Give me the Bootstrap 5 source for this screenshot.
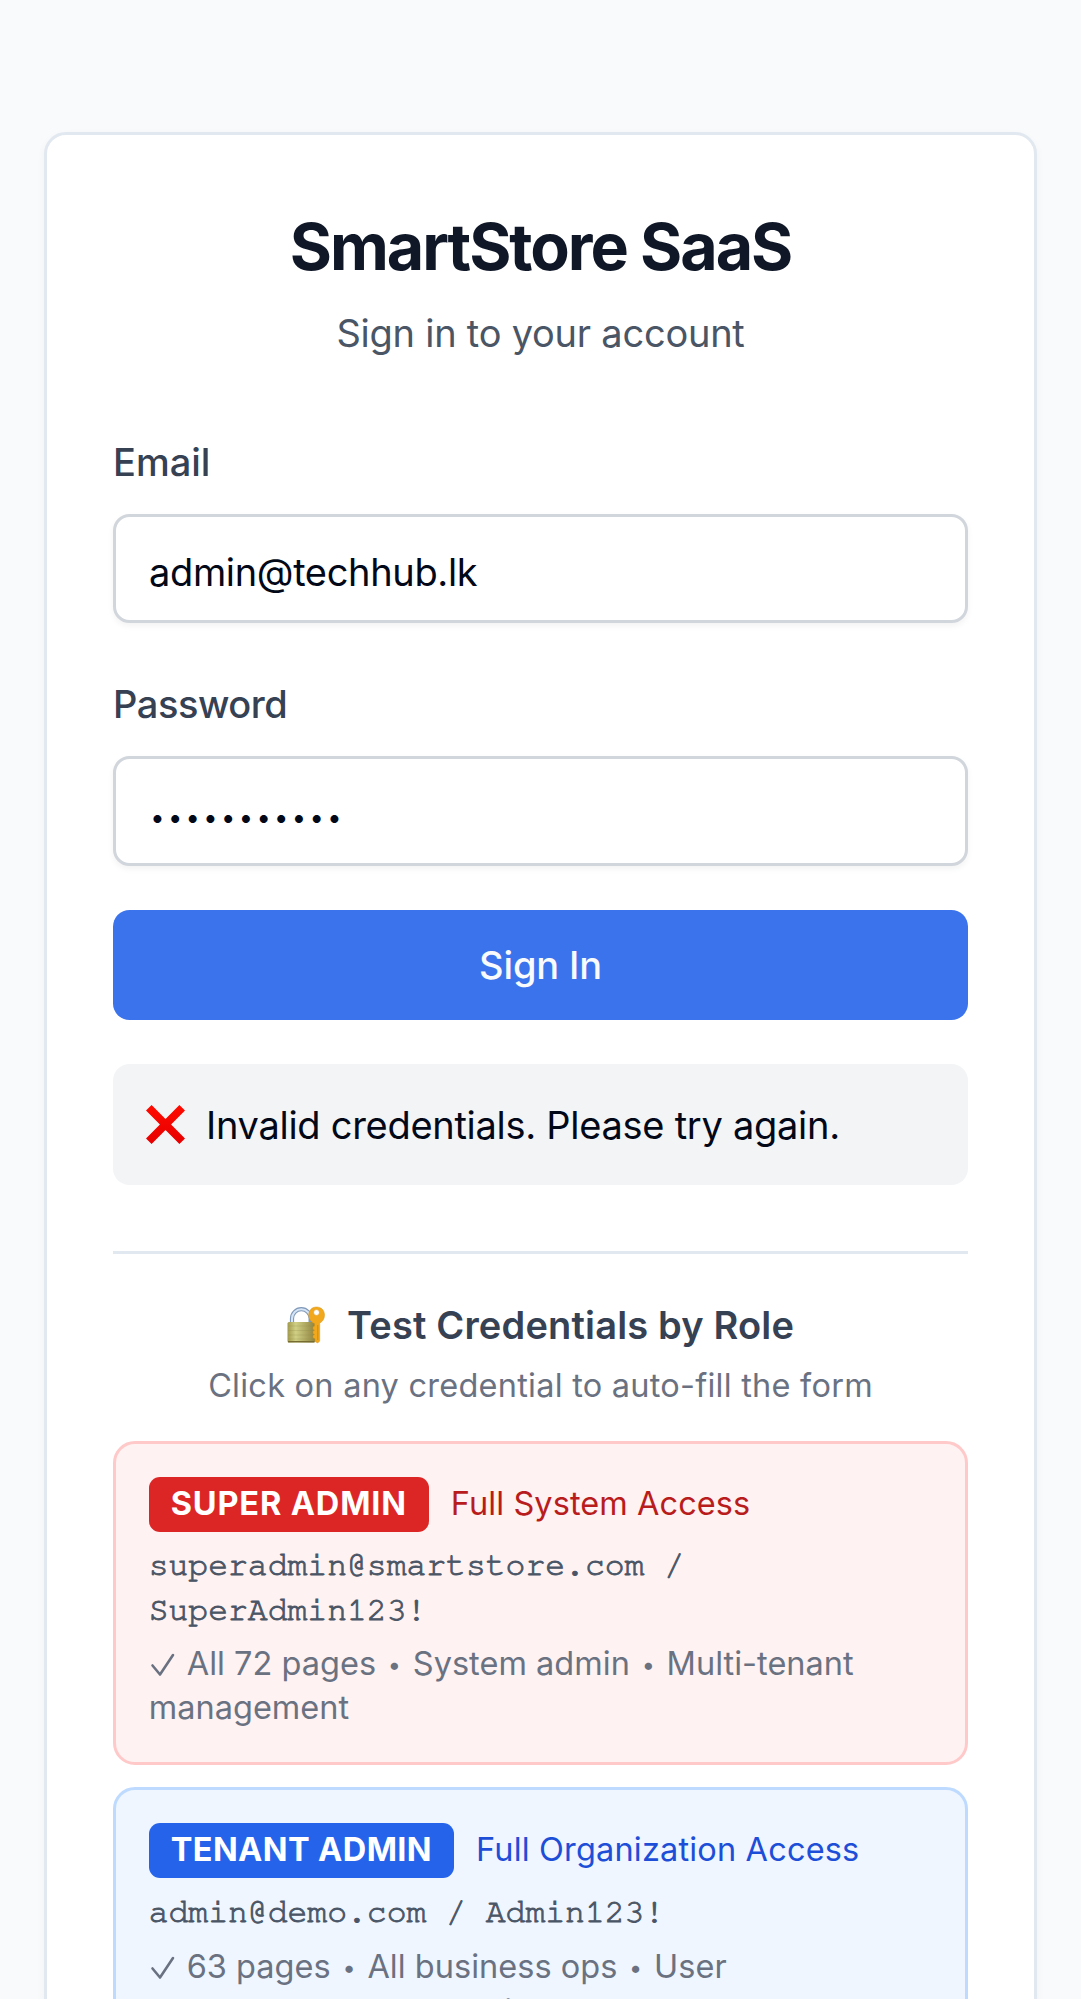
<!DOCTYPE html>
<html lang="en">
<head>
<meta charset="utf-8">
<meta name="viewport" content="width=device-width, initial-scale=1">
<title>SmartStore SaaS</title>
<link href="https://cdn.jsdelivr.net/npm/bootstrap@5.3.0/dist/css/bootstrap.min.css" rel="stylesheet">
<style>
html{overflow:hidden}
body{background:#f8fafc;font-family:Inter,"Liberation Sans",sans-serif;font-size:38px;color:#020817;height:1999px;overflow:hidden}
.login-wrap{padding:132px 44px 0}
.login-card{border:3px solid #e2e8f0;border-radius:22px;padding:79.3px 66px 66px;box-shadow:0 3px 8px rgba(0,0,0,.04)}
.brand-title{font-size:64.5px;line-height:66px;font-weight:700;letter-spacing:-2.05px;color:#101828;margin-bottom:26px}
.brand-sub{line-height:55px;letter-spacing:-.24px;color:#4a5565;margin-bottom:81.7px}
.field-label{line-height:38px;font-weight:500;color:#364153;margin-bottom:33px}
.field-label-pw{letter-spacing:-.45px}
.field-box,.field-box:focus{height:109.5px;border:3px solid #d1d5dc;border-radius:16.6px;padding:6px 33px 0;font-size:38px;color:#020817;background:#fff;box-shadow:0 3px 6px rgba(0,0,0,.05);letter-spacing:-.35px}
.field-gap{margin-bottom:62px}
.pw-box,.pw-box:focus{font-size:25.5px;letter-spacing:3.36px;padding:10px 33px 0 34.2px}
.btn-signin,.btn-signin:hover{height:110.5px;margin-top:44px;border:0;border-radius:16.6px;background:#3b73ed;color:#f8fafc;font-size:38px;font-weight:500;letter-spacing:-.15px;padding-top:6px}
.msg-box{height:121px;margin-top:43.7px;border:0;border-radius:16.6px;background:#f3f4f6;padding:2px 33px 0;letter-spacing:-.28px;color:#020817}
.msg-box svg{width:39px;height:39px;margin-right:21px;margin-top:-2px}
.cred-section{border-top:3px solid #e2e8f0;margin-top:66px;padding-top:43.4px}
.cred-title{font-size:38px;line-height:55px;font-weight:600;letter-spacing:.17px;color:#364153;margin-bottom:11.6px}
.cred-title svg{width:38px;height:38px;margin-right:22px}
.cred-hint{font-size:32.5px;line-height:44px;letter-spacing:.24px;color:#6a7282;margin-bottom:33px}
.cred-item{border:3px solid;border-radius:22px;padding:32.7px 32.7px 32.3px;margin-bottom:22.3px;font-size:32.5px}
.cred-red{background:#fef2f2;border-color:#ffc9c9}
.cred-blue{background:#eff6ff;border-color:#bedbff}
.role-tag{height:55px;border-radius:11px;padding:0 22px;font-size:32.5px;font-weight:700;margin-right:22px;color:#fff}
.role-red{background:#dc2626;letter-spacing:.85px}
.role-blue{background:#2563eb;letter-spacing:.4px}
.access-red{color:#b91c1c;letter-spacing:.07px}
.access-blue{color:#1d4ed8;letter-spacing:.17px}
.login-pair{font-family:FreeMono,"Liberation Mono",monospace;font-size:33.05px;line-height:44.4px;margin-top:12.4px;color:#4a5565;-webkit-text-stroke:.9px #4a5565}
.scope-line{line-height:44.4px;margin-top:8.7px;margin-bottom:-.7px;color:#6a7282;letter-spacing:.02px}
.scope-line svg{width:26px;height:26px;margin-right:12px;vertical-align:-2px}
.cred-blue .scope-line{line-height:45.4px}
.sep-dot{font-size:.72em;line-height:1;margin:0 2.6px;vertical-align:1.8px}
</style>
</head>
<body>
<main class="login-wrap">
<div class="card login-card">
  <h1 class="brand-title text-center">SmartStore SaaS</h1>
  <p class="brand-sub text-center">Sign in to your account</p>
  <form>
    <div class="field-gap">
      <label class="field-label d-block" for="email">Email</label>
      <input class="form-control field-box" id="email" type="text" value="admin@techhub.lk">
    </div>
    <div>
      <label class="field-label field-label-pw d-block" for="pw">Password</label>
      <input class="form-control field-box pw-box" id="pw" type="text" value="•••••••••••">
    </div>
    <button class="btn btn-primary btn-signin w-100 d-flex align-items-center justify-content-center" type="button">Sign In</button>
  </form>
  <div class="alert msg-box mb-0 d-flex align-items-center" role="alert">
    <svg viewBox="0 0 39 39"><defs><linearGradient id="xg" x1="0" y1="0" x2="0" y2="1"><stop offset="0" stop-color="#ff0a00"/><stop offset="1" stop-color="#e60000"/></linearGradient></defs><path fill="url(#xg)" d="M5.6 0 19.5 13.9 33.4 0 39 5.6 25.1 19.5 39 33.4 33.4 39 19.5 25.1 5.6 39 0 33.4 13.9 19.5 0 5.6Z"/></svg>
    <span>Invalid credentials. Please try again.</span>
  </div>
  <section class="cred-section">
    <h2 class="cred-title d-flex align-items-center justify-content-center">
      <svg viewBox="0 0 38 38"><defs><linearGradient id="lk" x1="0" y1="0" x2="1" y2="0"><stop offset="0" stop-color="#a29a4c"/><stop offset=".3" stop-color="#d0cf85"/><stop offset="1" stop-color="#8f8340"/></linearGradient></defs><path d="M5 18v-5.5a9.3 9.3 0 0 1 18.600 0V18" fill="none" stroke="#7f99b8" stroke-width="4.200"/><path d="M5 18v-5.500a9.300 9.300 0 0 1 18.600 0" fill="none" stroke="#d5e4f6" stroke-width="2"/><rect x=".5" y="16" width="27.500" height="20.500" rx="1.500" fill="url(#lk)"/><path d="M1 20h26.500M1 24.500h26.500M1 29h26.500M1 33h26.500" stroke="#8c8446" stroke-opacity=".3" stroke-width=".8"/><path d="M1 35.700h26.500" stroke="#766b30" stroke-width="1.400"/><path fill-rule="evenodd" fill="#f2a81d" stroke="#d9900f" stroke-width=".5" d="M29.500 1c5 0 8 3.600 8 8 0 4-2 6.500-4.800 8.200V35l-2 2-2.700-1.600v-2.600l-2-1v-2.200l1.600-1-1.600-1v-2.400l1.600-1-1.600-1V21l1.600-1v-2.500c-3.500-1.300-5.800-4.500-5.800-8.500 0-4.500 3-8 7.700-8Zm0 2.600a2.900 2.900 0 1 0 .01 5.800 2.900 2.900 0 0 0 0-5.800Z"/><path d="M30.800 19v15" stroke="#d08a10" stroke-width="1"/></svg>
      <span>Test Credentials by Role</span>
    </h2>
    <p class="cred-hint text-center">Click on any credential to auto-fill the form</p>
    <div class="cred-item cred-red">
      <div class="d-flex align-items-center"><span class="role-tag role-red d-flex align-items-center">SUPER ADMIN</span><span class="access-red">Full System Access</span></div>
      <div class="login-pair">superadmin@smartstore.com / SuperAdmin123!</div>
      <div class="scope-line"><svg viewBox="0 0 26 26" fill="none" stroke="#6a7282" stroke-width="2.600" stroke-linecap="round" stroke-linejoin="round"><path d="m3.500 14.500 7.500 9L24 4"/></svg>All 72 pages <span class="sep-dot">•</span> System admin <span class="sep-dot">•</span> Multi-tenant management</div>
    </div>
    <div class="cred-item cred-blue">
      <div class="d-flex align-items-center"><span class="role-tag role-blue d-flex align-items-center">TENANT ADMIN</span><span class="access-blue">Full Organization Access</span></div>
      <div class="login-pair">admin@demo.com / Admin123!</div>
      <div class="scope-line"><svg viewBox="0 0 26 26" fill="none" stroke="#6a7282" stroke-width="2.600" stroke-linecap="round" stroke-linejoin="round"><path d="m3.500 14.500 7.500 9L24 4"/></svg>63 pages <span class="sep-dot">•</span> All business ops <span class="sep-dot">•</span> User management <span class="sep-dot">•</span> Integrations</div>
    </div>
  </section>
</div>
</main>
<script src="https://cdn.jsdelivr.net/npm/bootstrap@5.3.0/dist/js/bootstrap.bundle.min.js"></script>
</body>
</html>
